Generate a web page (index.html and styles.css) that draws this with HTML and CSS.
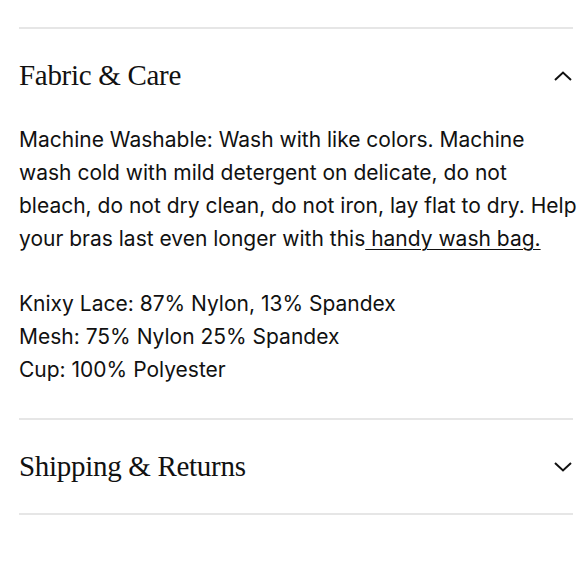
FILE: index.html
```html
<!DOCTYPE html>
<html>
<head>
<meta charset="utf-8">
<link rel="stylesheet" href="styles.css">
</head>
<body>
<div class="accordion">
  <section class="item open">
    <div class="head">
      <h2 class="title">Fabric &amp; Care</h2>
      <svg class="chev" width="18" height="10" viewBox="0 0 18 10"><path d="M1 9 L9 1.5 L17 9" fill="none" stroke="#111" stroke-width="2"/></svg>
    </div>
    <div class="body">
      <p>Machine Washable: Wash with like colors. Machine wash cold with mild detergent on delicate, do not bleach, do not dry clean, do not iron, lay flat to dry. Help your bras last even longer with this<a href="#"> handy wash bag.</a></p>
      <p>Knixy Lace: 87% Nylon, 13% Spandex<br>Mesh: 75% Nylon 25% Spandex<br>Cup: 100% Polyester</p>
    </div>
  </section>
  <section class="item">
    <div class="head">
      <h2 class="title">Shipping &amp; Returns</h2>
      <svg class="chev" width="18" height="10" viewBox="0 0 18 10"><path d="M1 1 L9 8.5 L17 1" fill="none" stroke="#111" stroke-width="2"/></svg>
    </div>
  </section>
</div>
</body>
</html>
```
FILE: styles.css
```css
html, body { margin: 0; padding: 0; background: #fff; }
body { color: #111; }
.accordion {
  padding: 27px 7px 0 19px;
}
.item {
  border-top: 2px solid #e6e6e6;
}
.item:last-child {
  border-bottom: 2px solid #e6e6e6;
}
.head {
  height: 93px;
  display: flex;
  align-items: center;
  justify-content: space-between;
}
.title {
  margin: 0;
  font-family: "Liberation Serif", "Times New Roman", serif;
  font-weight: normal;
  font-size: 29px;
  letter-spacing: -0.3px;
  color: #111;
}
.chev { margin-right: 1px; }
.body {
  font-family: Inter, "Liberation Sans", sans-serif;
  font-size: 21px;
  line-height: 33px;
  padding-bottom: 32px;
  margin-top: 1px;
  margin-right: -6px;
}
.body p { margin: 0 0 32px 0; }
.body p:last-child { margin-bottom: 0; }
.body a { color: #111; text-decoration: underline; text-underline-offset: 3px; text-decoration-thickness: 1px; }
```
